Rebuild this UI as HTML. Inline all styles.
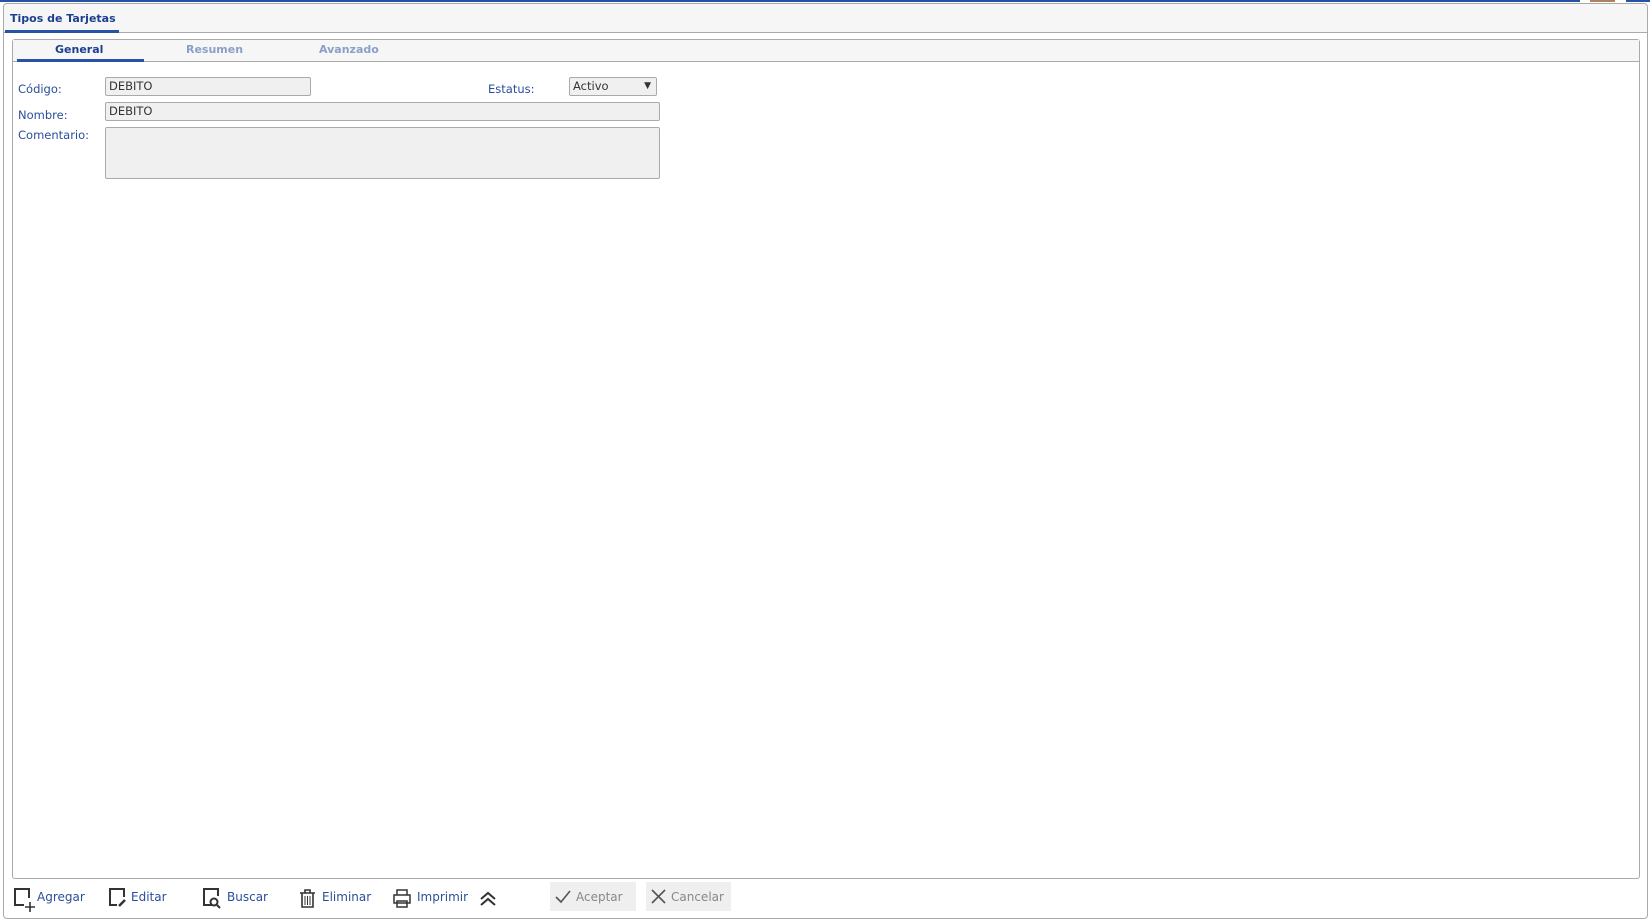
<!DOCTYPE html>
<html><head><meta charset="utf-8"><style>
*{box-sizing:border-box;margin:0;padding:0}
body{width:1650px;height:922px;background:#fff;font-family:"DejaVu Sans","Liberation Sans",sans-serif;font-size:12px;position:relative;overflow:hidden}
.a{position:absolute}
.lbl{color:#2a4f9a;font-size:11.5px}
.inp{background:#f0f0f0;border:1px solid #aaa;border-radius:2px;font-size:11.5px;color:#333;padding:1px 3px;line-height:15px}
.tb{color:#2a4f9a;font-size:12px}
</style></head><body>
<div class="a" style="left:0;top:0;width:1650px;height:2px;background:#2653a5"></div>
<div class="a" style="left:1580px;top:0;width:46px;height:3px;background:#fff"></div>
<div class="a" style="left:1590px;top:0;width:25px;height:2px;background:#b08060"></div>
<div class="a" style="left:3px;top:3px;width:1645px;height:916px;border:1px solid #aaa;border-radius:4px;background:#fff"></div>
<div class="a" style="left:4px;top:4px;width:1643px;height:29px;background:#f6f6f6;border-bottom:1px solid #aaa;border-radius:4px 4px 0 0"></div>
<div class="a" style="left:10px;top:12px;font-weight:bold;color:#1d3f8f;font-size:11px">Tipos de Tarjetas</div>
<div class="a" style="left:5px;top:30px;width:114px;height:3px;background:#2653a5"></div>
<div class="a" style="left:12px;top:39px;width:1628px;height:840px;border:1px solid #aaa;border-radius:3px;background:#fff"></div>
<div class="a" style="left:13px;top:40px;width:1626px;height:22px;background:#f6f6f6;border-bottom:1px solid #aaa"></div>
<div class="a" style="left:55px;top:43px;font-weight:bold;color:#1d3f8f;font-size:11px">General</div>
<div class="a" style="left:186px;top:43px;font-weight:bold;color:#8aa0c8;font-size:11px">Resumen</div>
<div class="a" style="left:319px;top:43px;font-weight:bold;color:#8aa0c8;font-size:11px">Avanzado</div>
<div class="a" style="left:17px;top:59px;width:127px;height:3px;background:#2653a5"></div>
<div class="a lbl" style="left:18px;top:82px">Código:</div>
<div class="a inp" style="left:105px;top:77px;width:206px;height:19px">DEBITO</div>
<div class="a lbl" style="left:488px;top:82px">Estatus:</div>
<div class="a inp" style="left:569px;top:77px;width:88px;height:19px;background:#f0f0f0">Activo<span style="position:absolute;right:5px;top:1px;font-size:9px">▼</span></div>
<div class="a lbl" style="left:18px;top:108px">Nombre:</div>
<div class="a inp" style="left:105px;top:102px;width:555px;height:19px">DEBITO</div>
<div class="a lbl" style="left:18px;top:128px">Comentario:</div>
<div class="a inp" style="left:105px;top:127px;width:555px;height:52px"></div>
<svg class="a" style="left:0;top:882px" width="760" height="32">
<g fill="none" stroke="#333" stroke-width="2">
<path d="M24 23H15V7h14v9"/><path d="M30 20v10M25 25h10" stroke-width="1.6"/>
<path d="M117 23h-7V7h14v8"/><path d="M119 24l6-6" stroke-width="2.5"/>
<path d="M212 23h-8V7h14v7"/><circle cx="214" cy="20" r="3.5"/><path d="M217 23l3 3"/>
<path d="M300 11h15M305 11V8h5v3M302 11v14h11V11" stroke-width="1.6"/><path d="M305 14v9M307.5 14v9M310 14v9" stroke-width="1"/>
<path d="M397 13V8h10v5M394 13h16v8h-16zM397 19h10v6h-10z" stroke-width="1.5"/>
<path d="M481 17l7-6 7 6M481 23l7-6 7 6"/>
</g>
<rect x="550" y="0" width="86" height="29" fill="#efefef"/>
<path d="M556 15l5 5 9-11" fill="none" stroke="#555" stroke-width="1.6"/>
<rect x="646" y="0" width="85" height="29" fill="#efefef"/>
<path d="M652 8l13 13M665 8l-13 13" stroke="#555" stroke-width="1.6"/>
</svg>
<div class="a tb" style="left:37px;top:890px">Agregar</div>
<div class="a tb" style="left:131px;top:890px">Editar</div>
<div class="a tb" style="left:227px;top:890px">Buscar</div>
<div class="a tb" style="left:322px;top:890px">Eliminar</div>
<div class="a tb" style="left:417px;top:890px">Imprimir</div>
<div class="a" style="left:576px;top:890px;color:#888;font-size:12px">Aceptar</div>
<div class="a" style="left:671px;top:890px;color:#888;font-size:12px">Cancelar</div>
</body></html>
